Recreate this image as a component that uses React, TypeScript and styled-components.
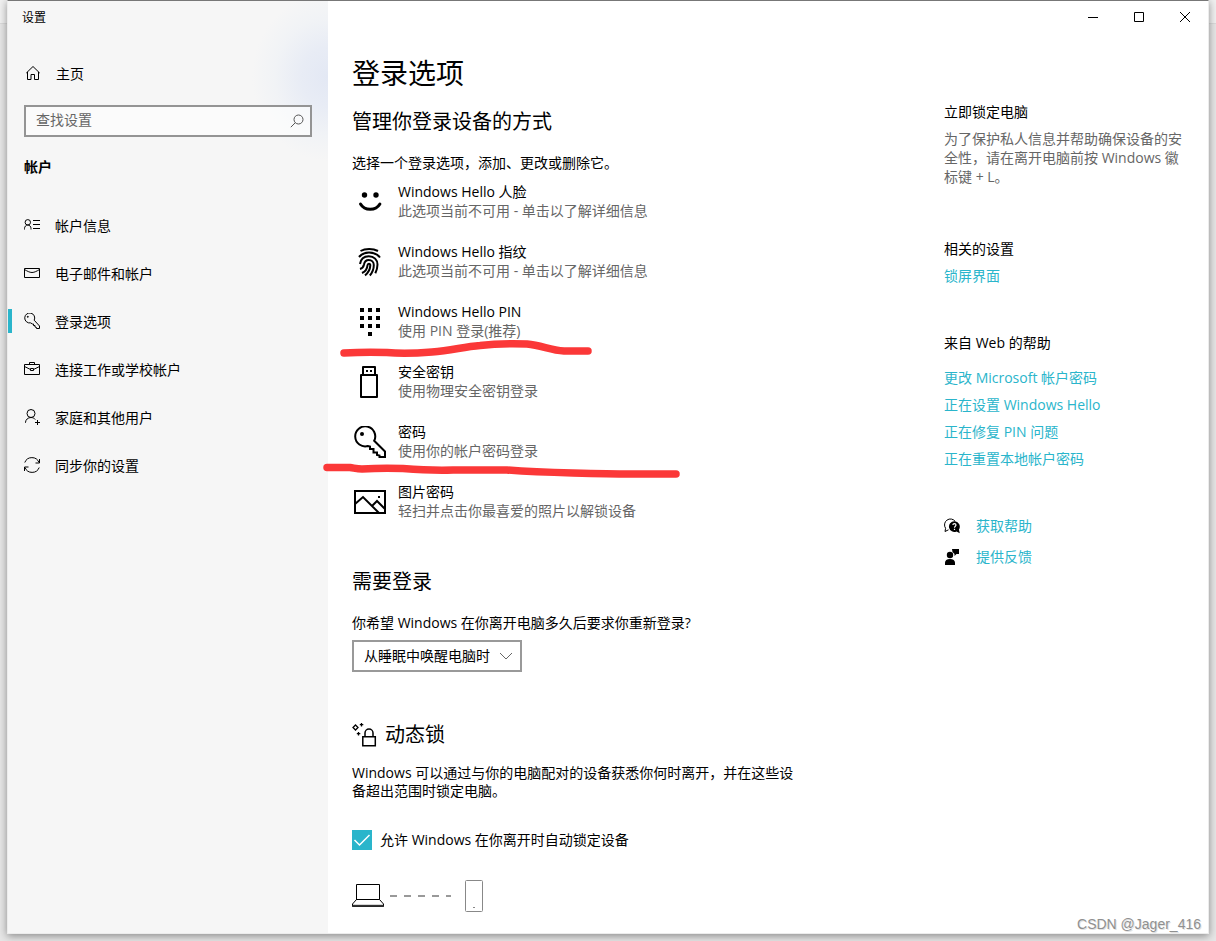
import React from "react";
import styled, { createGlobalStyle } from "styled-components";

const accent = "#2ab5cb";
const textGray = "#666666";
const borderGray = "#949494";

const GlobalStyle = createGlobalStyle`
  *, *::before, *::after { box-sizing: border-box; }
  body {
    margin: 0;
    background: linear-gradient(#f0f0f0 0 23px, #dadada 23px 24px, #e6e6e6 24px);
    font-family: "Open Sans", "Noto Sans CJK SC", sans-serif;
    font-size: 14px;
    line-height: 19px;
    color: #000;
  }
  h1, h2, h3, p, ul { margin: 0; padding: 0; font-weight: 400; }
  ul { list-style: none; }
  button, input, select { font: inherit; color: inherit; margin: 0; }
  svg { display: block; flex: none; }
`;

const Page = styled.div`
  position: relative;
  min-height: 100vh;
  padding: 0 7px 7px;
`;

const Window = styled.div`
  display: grid;
  grid-template-columns: 320px minmax(0, 1fr);
  min-height: calc(100vh - 7px);
  border: 1px solid #ececec;
  border-top-color: #777;
  background: #fff;
  box-shadow: 0 2px 8px rgba(0, 0, 0, 0.4);
`;

const Sidebar = styled.aside`
  background: radial-gradient(ellipse 76px 84px at 320px 76px, #e3e8f4, #e8ecf5 35%, #f1f3f6 70%, #f6f6f6) #f6f6f6;
`;

const WindowTitle = styled.div`
  height: 32px;
  padding-left: 14px;
  font-size: 12px;
  line-height: 34px;
`;

const HomeButton = styled.button`
  display: flex;
  align-items: center;
  gap: 15px;
  width: 100%;
  height: 40px;
  margin-top: 20px;
  padding: 0 17px;
  border: 0;
  background: none;
  text-align: left;
`;

const SearchBox = styled.label`
  display: flex;
  align-items: center;
  height: 32px;
  margin: 12px 16px 0;
  padding: 0 6px 0 10px;
  border: 2px solid ${borderGray};
  background: rgba(255, 255, 255, 0.6);
`;

const SearchInput = styled.input`
  flex: 1;
  min-width: 0;
  height: 28px;
  padding: 0 0 4px;
  border: 0;
  outline: 0;
  background: none;
  &::placeholder { color: ${textGray}; opacity: 1; }
`;

const SectionName = styled.h2`
  margin: 20px 16px 0;
  font-size: 14px;
  font-weight: 700;
  line-height: 20px;
`;

const Nav = styled.nav`
  margin-top: 24px;
`;

const NavItem = styled.button<{ $active?: boolean }>`
  display: flex;
  align-items: center;
  gap: 12px;
  width: 100%;
  height: 48px;
  padding: 0 12px 0 0;
  border: 0;
  background: none;
  text-align: left;
  &::before {
    content: "";
    width: 4px;
    height: 24px;
    background: ${(p) => (p.$active ? accent : "transparent")};
  }
  span { margin-left: 3px; }
`;

const Content = styled.div`
  display: flex;
  flex-direction: column;
`;

const Caption = styled.header`
  display: flex;
  justify-content: flex-end;
  height: 32px;
`;

const CaptionButton = styled.button`
  display: grid;
  place-items: center;
  width: 46px;
  height: 32px;
  padding: 0;
  border: 0;
  background: none;
`;

const Columns = styled.div`
  display: grid;
  grid-template-columns: minmax(0, 1fr) 240px;
  gap: 24px;
  padding: 0 24px 20px;
`;

const Main = styled.main`
  padding-top: 20px;
`;

const PageTitle = styled.h1`
  font-size: 28px;
  line-height: 40px;
`;

const Heading = styled.h2<{ $top: number }>`
  display: flex;
  align-items: center;
  gap: 8px;
  margin-top: ${(p) => p.$top}px;
  font-size: 20px;
  line-height: 28px;
`;

const Paragraph = styled.p<{ $top: number }>`
  max-width: 448px;
  margin-top: ${(p) => p.$top}px;
  line-height: 18px;
`;

const OptionList = styled.ul`
  position: relative;
`;

const OptionButton = styled.button`
  display: flex;
  align-items: center;
  gap: 12px;
  height: 60px;
  padding: 0 0 0 2px;
  border: 0;
  background: none;
  text-align: left;
`;

const OptionText = styled.span`
  padding-bottom: 2px;
`;

const OptionTitle = styled.span`
  display: block;
`;

const OptionHint = styled.span`
  display: block;
  color: ${textGray};
`;

const Marks = styled.svg`
  position: absolute;
  top: 0;
  left: 0;
  overflow: visible;
  pointer-events: none;
`;

const SelectBox = styled.div`
  display: inline-grid;
  grid-template-columns: 170px;
  align-items: center;
  margin-top: 8px;
  > * { grid-area: 1 / 1; }
  svg { justify-self: end; margin-right: 9px; pointer-events: none; }
`;

const Select = styled.select`
  appearance: none;
  height: 32px;
  padding: 0 30px 2px 10px;
  border: 2px solid #999;
  border-radius: 0;
  background: #fff;
`;

const CheckRow = styled.label`
  display: flex;
  align-items: center;
  gap: 8px;
  height: 20px;
  margin-top: 30px;
`;

const CheckText = styled.span`
  padding-bottom: 2px;
`;

const CheckBox = styled.span`
  display: grid;
  > * { grid-area: 1 / 1; }
  svg { pointer-events: none; }
`;

const CheckInput = styled.input`
  appearance: none;
  width: 20px;
  height: 20px;
  background: #fff;
  border: 2px solid #333;
  &:checked { background: ${accent}; border-color: ${accent}; }
`;

const Devices = styled.div`
  margin-top: 30px;
`;

const Side = styled.aside`
  padding-top: 69px;
`;

const SideGroup = styled.section<{ $gap: number }>`
  margin-bottom: ${(p) => p.$gap}px;
`;

const SideTitle = styled.h3`
  font-size: 14px;
  line-height: 19px;
`;

const SideText = styled.p`
  margin-top: 8px;
  color: ${textGray};
`;

const SideLinks = styled.div<{ $top: number }>`
  display: flex;
  flex-direction: column;
  align-items: flex-start;
  gap: 8px;
  margin-top: ${(p) => p.$top}px;
`;

const Link = styled.a`
  color: ${accent};
  text-decoration: none;
`;

const HelpRow = styled.div`
  display: flex;
  align-items: center;
  gap: 16px;
  height: 31px;
`;

const Watermark = styled.div`
  position: absolute;
  right: 15px;
  bottom: 7px;
  font-family: "Liberation Sans", sans-serif;
  font-size: 14px;
  line-height: 20px;
  color: #909090;
  text-shadow: 1px 1px 0 #e2e2e2;
`;

type IconProps = { size?: number; w?: number; children: React.ReactNode };

const Icon = ({ size = 16, w = 1, children }: IconProps) => (
  <svg width={size} height={size} viewBox={`0 0 ${size} ${size}`} fill="none" stroke="#000" strokeWidth={w} aria-hidden="true">
    {children}
  </svg>
);

const navItems = [
  {
    label: "帐户信息",
    icon: (
      <Icon>
        <circle cx="3.800" cy="5.300" r="2.700" />
        <path d="M.5 12.500V11.600C.5 9.600 1.900 8 3.800 8s3.200 1.600 3.200 3.600v.9M9 3.500h7M9 7.500h7M9 11.500h7" />
      </Icon>
    ),
  },
  {
    label: "电子邮件和帐户",
    icon: (
      <Icon>
        <path d="M.5 3.500h15v9H.5zM.5 4.500C3 6 5.500 7.500 8 7.500S13 6 15.500 4.500" />
      </Icon>
    ),
  },
  {
    label: "登录选项",
    active: true,
    icon: (
      <Icon>
        <path d="M10.200 7.200A5 5 0 1 0 6.600 9.900L8.500 11h1v1.500H11V14l1.500.5V15.500h3V13z" />
        <circle cx="3.800" cy="3.800" r=".5" fill="#000" />
      </Icon>
    ),
  },
  {
    label: "连接工作或学校帐户",
    icon: (
      <Icon>
        <path d="M.5 3.500h15v10H.5zM5.500 3.500v-2h5v2M.5 5.500 6.500 8.500M15.500 5.500 9.500 8.500M6.500 7.500h3V9.500h-3z" />
      </Icon>
    ),
  },
  {
    label: "家庭和其他用户",
    icon: (
      <Icon>
        <circle cx="7" cy="4.500" r="4" />
        <path d="M1.500 14V13.500C1.500 10.800 3.900 8.500 7 8.500c2 0 3.500 1 4.300 2M11 13.500h5M13.500 11v5" />
      </Icon>
    ),
  },
  {
    label: "同步你的设置",
    icon: (
      <Icon>
        <path d="M.8 5.500A7.600 7.600 0 0 1 15 5.500M15.500 2v4h-4M15.200 10.500A7.600 7.600 0 0 1 1 10.500M.5 14v-4h4" />
      </Icon>
    ),
  },
];

const options = [
  {
    title: "Windows Hello 人脸",
    hint: "此选项当前不可用 - 单击以了解详细信息",
    icon: (
      <Icon size={32} w={3}>
        <circle cx="10.500" cy="9" r="2.700" fill="#000" stroke="none" />
        <circle cx="22" cy="9" r="2.700" fill="#000" stroke="none" />
        <path d="M6.500 18c2 3.400 5.500 5.300 9.700 5.300s7.700-1.900 9.700-5.300" strokeLinecap="round" />
      </Icon>
    ),
  },
  {
    title: "Windows Hello 指纹",
    hint: "此选项当前不可用 - 单击以了解详细信息",
    icon: (
      <Icon size={32} w={2}>
        <path d="M6.500 5C9 3.600 12 3 15.200 3s6.300.7 8.800 2M5 11C7.500 8 11 6.500 15 6.500c4.500 0 8.500 1.800 11 5M6 18C6.700 13.200 10 10.200 14.800 10.200c5.300 0 8.700 3.800 8.700 8.300 0 3.300-.9 6-2.200 8.700M6 23c2.200-.6 3.500-2.300 4-4.500.5-2.800 2.200-4.500 4.800-4.500 2.900 0 5 2 5 5 0 4.200-1.600 7.800-4 10.500M8 27c3.300-1.500 5.200-4.300 5.500-7.700.1-1 .6-1.600 1.400-1.600.9 0 1.400.7 1.400 1.700-.2 4-2.100 7.500-5.300 10" />
      </Icon>
    ),
  },
  {
    title: "Windows Hello PIN",
    hint: "使用 PIN 登录(推荐)",
    icon: (
      <Icon size={32} w={4}>
        <path d="M6 4h4M14 4h4M22 4h4M6 12h4M14 12h4M22 12h4M6 20h4M14 20h4M22 20h4M14 28h4" />
      </Icon>
    ),
  },
  {
    title: "安全密钥",
    hint: "使用物理安全密钥登录",
    icon: (
      <Icon size={32} w={2}>
        <path d="M9 9V1h12v8M7 9h16v22H7z" strokeLinejoin="round" />
        <path d="M12 5h2M16 5h2" />
      </Icon>
    ),
  },
  {
    title: "密码",
    hint: "使用你的帐户密码登录",
    icon: (
      <Icon size={32} w={2}>
        <path d="M20.200 14.800A10 10 0 1 0 14 20l2 .5V23h3.500v3.500H23V29l2.500.5V31H31V25.500z" />
        <circle cx="8" cy="8" r="2" fill="#000" stroke="none" />
      </Icon>
    ),
  },
  {
    title: "图片密码",
    hint: "轻扫并点击你最喜爱的照片以解锁设备",
    icon: (
      <Icon size={32} w={2}>
        <path d="M1 5h30v22H1zM1 18l8-7 16 16M18 20l5-5 8 8" />
        <path d="M24 11h2" />
      </Icon>
    ),
  },
];

const webHelp = ["更改 Microsoft 帐户密码", "正在设置 Windows Hello", "正在修复 PIN 问题", "正在重置本地帐户密码"];

export default function App() {
  return (
    <>
      <GlobalStyle />
      <Page>
        <Window>
          <Sidebar>
            <WindowTitle>设置</WindowTitle>
            <HomeButton>
              <Icon>
                <path d="M1.300 8 8 1.500 14.700 8M2.500 7V14.500H6V9.500H9.500v5h4V7" />
              </Icon>
              主页
            </HomeButton>
            <SearchBox>
              <SearchInput type="text" placeholder="查找设置" aria-label="查找设置" />
              <svg width="14" height="14" viewBox="0 0 14 14" fill="none" stroke="#555" aria-hidden="true">
                <circle cx="8.500" cy="5.500" r="4.500" />
                <path d="M5.300 8.700.8 13.200" />
              </svg>
            </SearchBox>
            <SectionName>帐户</SectionName>
            <Nav>
              {navItems.map((n) => (
                <NavItem key={n.label} $active={n.active}>
                  {n.icon}
                  <span>{n.label}</span>
                </NavItem>
              ))}
            </Nav>
          </Sidebar>
          <Content>
            <Caption>
              <CaptionButton aria-label="最小化">
                <Icon size={10}><path d="M0 5.500h10" /></Icon>
              </CaptionButton>
              <CaptionButton aria-label="最大化">
                <Icon size={10}><path d="M.5.500h9v9h-9z" /></Icon>
              </CaptionButton>
              <CaptionButton aria-label="关闭">
                <Icon size={10}><path d="M0 0l10 10M10 0 0 10" /></Icon>
              </CaptionButton>
            </Caption>
            <Columns>
              <Main>
                <PageTitle>登录选项</PageTitle>
                <Heading $top={15}>管理你登录设备的方式</Heading>
                <Paragraph $top={18}>选择一个登录选项，添加、更改或删除它。</Paragraph>
                <OptionList>
                  {options.map((o) => (
                    <li key={o.title}>
                      <OptionButton>
                        {o.icon}
                        <OptionText>
                          <OptionTitle>{o.title}</OptionTitle>
                          <OptionHint>{o.hint}</OptionHint>
                        </OptionText>
                      </OptionButton>
                    </li>
                  ))}
                  <Marks width="328" height="360" viewBox="0 0 328 360" fill="none" stroke="#fb3838" strokeWidth="7.500" strokeLinecap="round" strokeLinejoin="round" aria-hidden="true">
                    <path d="M-8 181C8 180 22 180 35 180.500 50 182 62 181.500 80 180 100 178 112 175 128 173.500 145 171.500 160 171.500 175 172 190 173.500 198 178 212 179H236" />
                    <path d="M-25 295.500H-2C2 296 5 297 10 297 25 296 38 296 51 296.500 70 298 85 298.500 101 298H155C180 300 200 300.500 221 301 240 301.500 260 302 278 302H324" />
                  </Marks>
                </OptionList>
                <Heading $top={36}>需要登录</Heading>
                <Paragraph $top={18}>
                  <label htmlFor="relogin">你希望 Windows 在你离开电脑多久后要求你重新登录?</label>
                </Paragraph>
                <SelectBox>
                  <Select id="relogin">
                    <option>从睡眠中唤醒电脑时</option>
                    <option>从不</option>
                  </Select>
                  <svg width="14" height="8" viewBox="0 0 14 8" fill="none" stroke="#666" aria-hidden="true">
                    <path d="M1 1l6 6 6-6" />
                  </svg>
                </SelectBox>
                <Heading $top={49}>
                  <svg width="25" height="24" viewBox="0 0 25 24" fill="none" stroke="#000" strokeWidth="1.500" aria-hidden="true">
                    <path d="M10.800 13.800h12.500v9H10.800zM13 13.500V10a4 4 0 0 1 8 0v3.500" />
                    <path d="M3.500 2l2.500 2.500L3.500 7 1 4.500z" strokeWidth="1.300" />
                    <path d="M9.500 0v3.500M7.800 1.700h3.500M6.500 9v3.500M4.800 10.700h3.500" strokeWidth="1.300" />
                  </svg>
                  动态锁
                </Heading>
                <Paragraph $top={15}>
                  Windows 可以通过与你的电脑配对的设备获悉你何时离开，并在这些设备超出范围时锁定电脑。
                </Paragraph>
                <CheckRow>
                  <CheckBox>
                    <CheckInput type="checkbox" defaultChecked />
                    <svg width="20" height="20" viewBox="0 0 20 20" fill="none" stroke="#fff" strokeWidth="1.500" aria-hidden="true">
                      <path d="M2.500 10l5 5 10-10" />
                    </svg>
                  </CheckBox>
                  <CheckText>允许 Windows 在你离开时自动锁定设备</CheckText>
                </CheckRow>
                <Devices>
                  <svg width="132" height="32" viewBox="0 0 132 32" fill="none" aria-hidden="true">
                    <path d="M4.500 20V4.500h23V19.500M4.500 19.500h23L31.500 24v2.500H.5V24z" stroke="#000" />
                    <path d="M.5 25.800h31" stroke="#333" strokeWidth="2" />
                    <path d="M38 16h7M52 16h7M66 16h7M80 16h7M94 16h5" stroke="#999" strokeWidth="2" />
                    <rect x="113.500" y=".5" width="17" height="31" rx="1" stroke="#888" />
                    <path d="M121 27.500h2" stroke="#888" />
                  </svg>
                </Devices>
              </Main>
              <Side>
                <SideGroup $gap={53}>
                  <SideTitle>立即锁定电脑</SideTitle>
                  <SideText>为了保护私人信息并帮助确保设备的安全性，请在离开电脑前按 Windows 徽标键 + L。</SideText>
                </SideGroup>
                <SideGroup $gap={48}>
                  <SideTitle>相关的设置</SideTitle>
                  <SideLinks $top={8}>
                    <Link href="#lock-screen">锁屏界面</Link>
                  </SideLinks>
                </SideGroup>
                <SideGroup $gap={42}>
                  <SideTitle>来自 Web 的帮助</SideTitle>
                  <SideLinks $top={16}>
                    {webHelp.map((t) => (
                      <Link key={t} href="#help">{t}</Link>
                    ))}
                  </SideLinks>
                </SideGroup>
                <HelpRow>
                  <svg width="16" height="16" viewBox="0 0 16 16" aria-hidden="true">
                    <path d="M4.500 11.800 1 13.500 1.600 10.300A5.400 5.400 0 1 1 11.300 3.500" fill="none" stroke="#000" />
                    <path d="M10.300 3.300a5.300 5.300 0 1 0 2.200 10.100L15.800 15.300 14.900 11.500A5.300 5.300 0 0 0 10.300 3.300z" />
                    <path d="M8.900 7.100c0-2 3.100-2 3.100 0 0 1.200-1.500 1.200-1.500 2.600M10.500 10.800v1.200" fill="none" stroke="#fff" strokeWidth="1.200" />
                  </svg>
                  <Link href="#get-help">获取帮助</Link>
                </HelpRow>
                <HelpRow>
                  <svg width="16" height="16" viewBox="0 0 16 16" aria-hidden="true">
                    <circle cx="6" cy="6" r="3.200" />
                    <path d="M1 16v-2.200C1 11.500 2.800 10 6 10s5 1.500 5 3.800V16zM8 0h7v5h-2.500l-2 2V5L8.500 3z" />
                  </svg>
                  <Link href="#feedback">提供反馈</Link>
                </HelpRow>
              </Side>
            </Columns>
          </Content>
        </Window>
        <Watermark>CSDN @Jager_416</Watermark>
      </Page>
    </>
  );
}
